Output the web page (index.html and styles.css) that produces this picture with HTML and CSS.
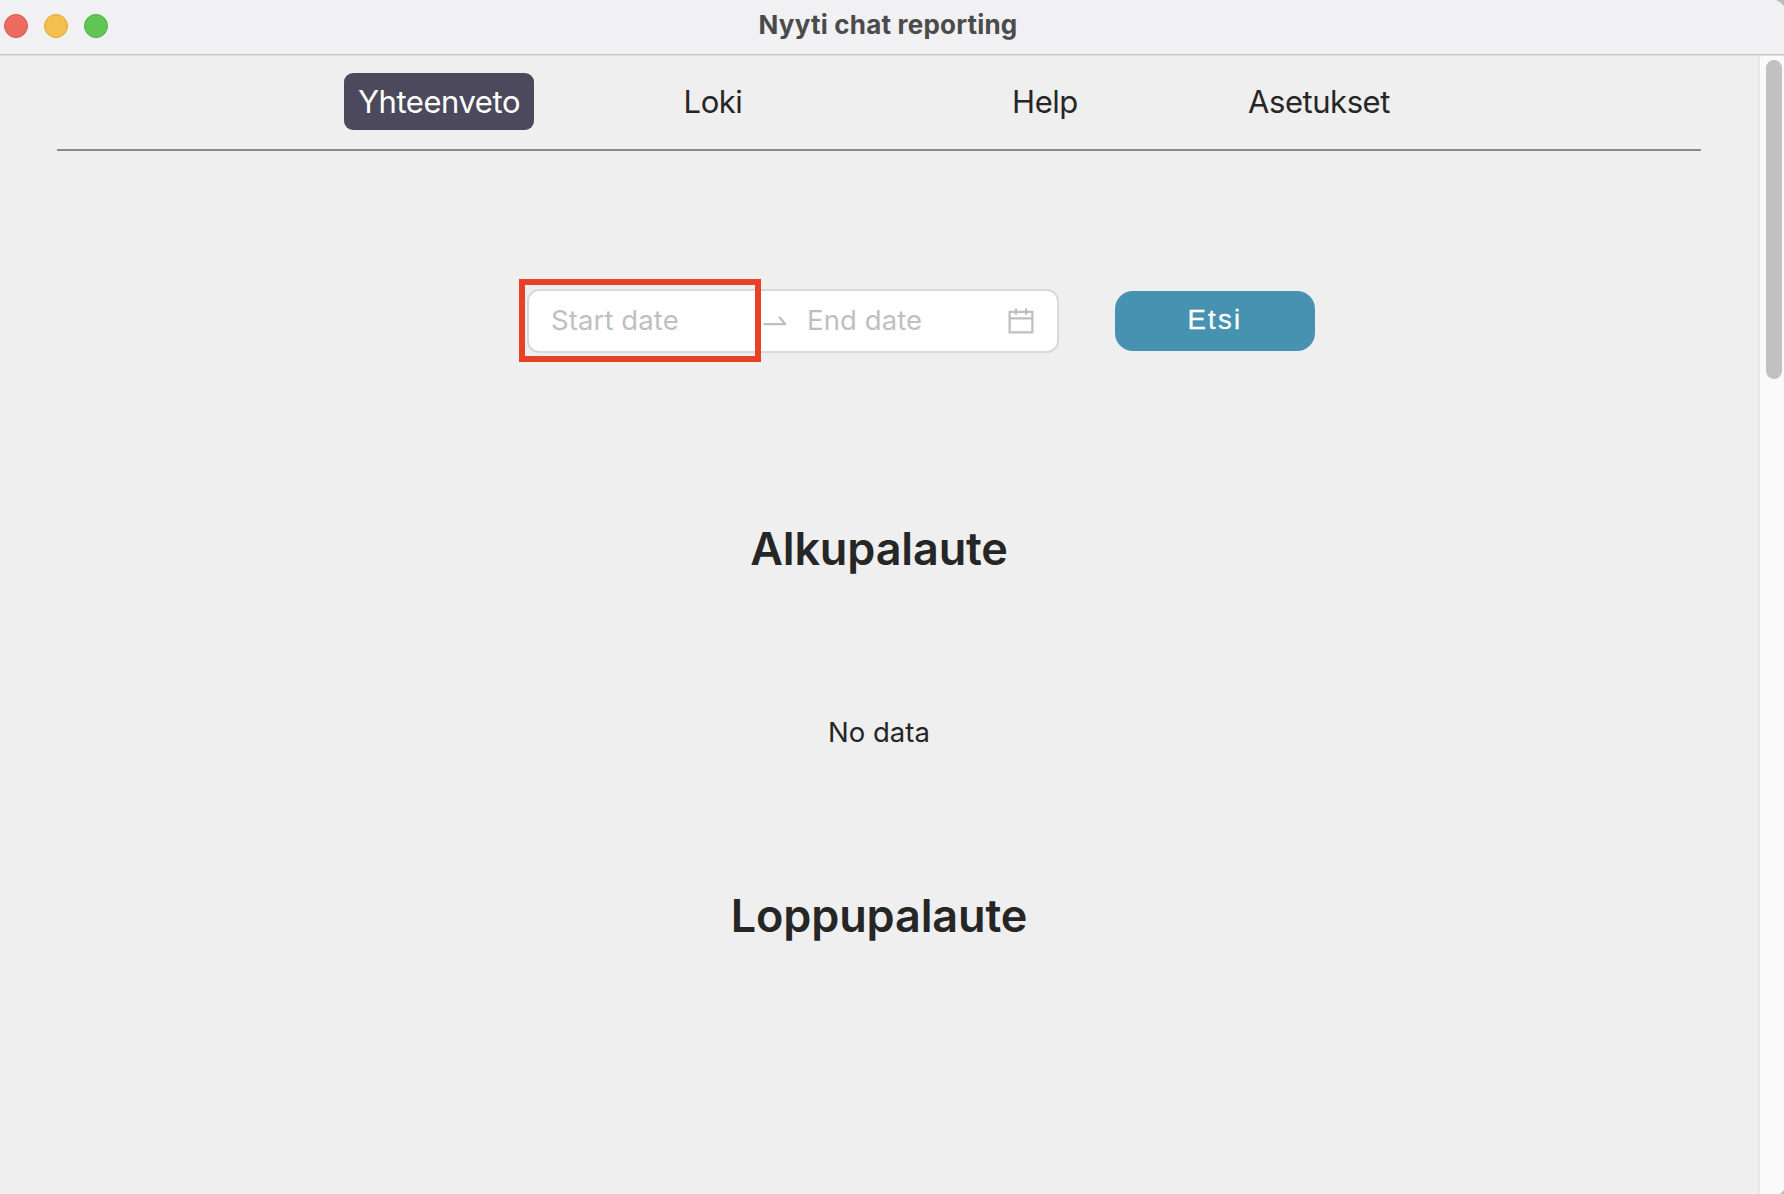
FILE: index.html
```html
<!DOCTYPE html>
<html lang="fi">
<head>
<meta charset="utf-8">
<title>Nyyti chat reporting</title>
<link rel="stylesheet" href="styles.css">
</head>
<body>
<div class="window">
  <header class="titlebar">
    <div class="lights"><span class="light red"></span><span class="light yellow"></span><span class="light green"></span></div>
    <div class="title">Nyyti chat reporting</div>
  </header>
  <div class="viewport">
    <main class="page">
      <nav class="nav">
        <a class="tab active">Yhteenveto</a>
        <a class="tab">Loki</a>
        <a class="tab third">Help</a>
        <a class="tab">Asetukset</a>
      </nav>
      <form class="search">
        <div class="range">
          <span class="field start">Start date</span>
          <svg class="arrow" viewBox="0 0 1024 1024"><path d="M873.1 596.2l-164-208A32 32 0 00684 376h-64.8c-6.7 0-10.4 7.7-6.3 13l144.3 183H152c-4.4 0-8 3.6-8 8v60c0 4.4 3.6 8 8 8h695.9c26.8 0 41.7-30.8 25.2-51.8z"/></svg>
          <span class="field end">End date</span>
          <svg class="calendar" viewBox="64 64 896 896"><path d="M880 184H712v-64c0-4.4-3.6-8-8-8h-56c-4.4 0-8 3.6-8 8v64H384v-64c0-4.4-3.6-8-8-8h-56c-4.4 0-8 3.6-8 8v64H144c-17.7 0-32 14.3-32 32v664c0 17.7 14.3 32 32 32h736c17.7 0 32-14.3 32-32V216c0-17.7-14.3-32-32-32zm-40 656H184V460h656v380zM184 392V256h128v48c0 4.4 3.6 8 8 8h56c4.4 0 8-3.6 8-8v-48h256v48c0 4.4 3.6 8 8 8h56c4.4 0 8-3.6 8-8v-48h128v136H184z"/></svg>
          <div class="highlight"></div>
        </div>
        <button class="submit" type="button">Etsi</button>
      </form>
      <h1 class="heading first">Alkupalaute</h1>
      <p class="empty">No data</p>
      <h1 class="heading last">Loppupalaute</h1>
    </main>
    <div class="scrollbar"><div class="thumb"></div></div>
  </div>
</div>
</body>
</html>
```
FILE: styles.css
```css
* { box-sizing: border-box; }
body { margin: 0; font-family: Inter, "Liberation Sans", sans-serif; color: #262626; background: #efefef; }
.window { position: relative; display: flex; flex-direction: column; width: 1784px; height: 1194px; overflow: hidden; }
.window::before, .window::after { content: ""; position: absolute; right: 0; background: #b9bfb5; z-index: 2; }
.window::before { top: 0; width: 8px; height: 6px; clip-path: polygon(0 0, 100% 0, 100% 100%, 60% 45%); }
.window::after { bottom: 0; width: 4px; height: 4px; clip-path: polygon(100% 0, 100% 100%, 0 100%); }

.titlebar { display: grid; grid-template-columns: 192px 1392px 200px; height: 55px; padding-top: 1px; background: #f1f1f3; border-bottom: 1px solid #c5c5c7; box-shadow: 0 1px 0 #dedede; z-index: 1; }
.lights { display: flex; gap: 16px; padding: 13px 0 0 4px; }
.light { width: 24px; height: 24px; border-radius: 50%; border: 1px solid; }
.red { background: #ec6a5e; border-color: #d9584c; }
.yellow { background: #f4bf4f; border-color: #dda73c; }
.green { background: #61c554; border-color: #4fae43; }
.title { text-align: center; font-size: 26px; font-weight: 700; line-height: 47px; letter-spacing: 0.2px; color: #4b4b4b; }

.viewport { display: flex; flex: 1; }
.page { width: 1758px; padding: 0 57px; background: #efefef; }
.nav { display: grid; grid-template-columns: repeat(4, 274px); justify-items: center; width: 1644px; height: 96px; padding: 18px 216px 0 245px; border-bottom: 2px solid #8a8a8a; }
.tab { height: 57px; padding: 0 14px; border-radius: 9px; font-size: 31px; line-height: 57px; letter-spacing: -0.45px; }
.third, .third + .tab { margin-left: 58px; margin-right: -58px; }
.active { display: flex; justify-content: center; width: 190px; color: #fff; background: #4b495b; }

.search { display: flex; gap: 56px; margin: 138px 0 0 470px; }
.range { position: relative; display: flex; align-items: center; width: 532px; height: 64px; padding-left: 22px; background: #fff; border: 2px solid #d9d9d9; border-radius: 12px; color: #bfbfbf; fill: #bfbfbf; }
.field { font-size: 27.5px; line-height: 58px; height: 60px; letter-spacing: 0.1px; }
.start { width: 208px; }
.arrow { width: 32px; height: 32px; }
.end { width: 199px; margin-left: 16px; }
.calendar { width: 28px; height: 28px; margin-left: 1px; }
.highlight { position: absolute; left: -10px; top: -12px; width: 242px; height: 83px; border: 6px solid #e74127; }
.submit { width: 200px; height: 60px; margin: 2px 0 0; padding: 0 0 2px; border: 0; border-radius: 18px; background: #4791b1; color: #fff; font: 27.5px/58px "Liberation Sans", Arial, sans-serif; letter-spacing: 2.3px; -webkit-text-stroke: 0.3px #fff; }

.heading { margin: 0; text-align: center; font-size: 45px; font-weight: 600; line-height: 60px; letter-spacing: -0.15px; }
.first { margin-top: 166px; }
.empty { margin: 123px 0 0; text-align: center; font-size: 27.5px; line-height: 60px; }
.last { margin-top: 124px; }

.scrollbar { width: 26px; padding: 5px 0 0 6px; background: #fafafa; border-left: 2px solid #e8e8e8; }
.thumb { width: 16px; height: 319px; border-radius: 8px; background: #c1c1c1; }
```
